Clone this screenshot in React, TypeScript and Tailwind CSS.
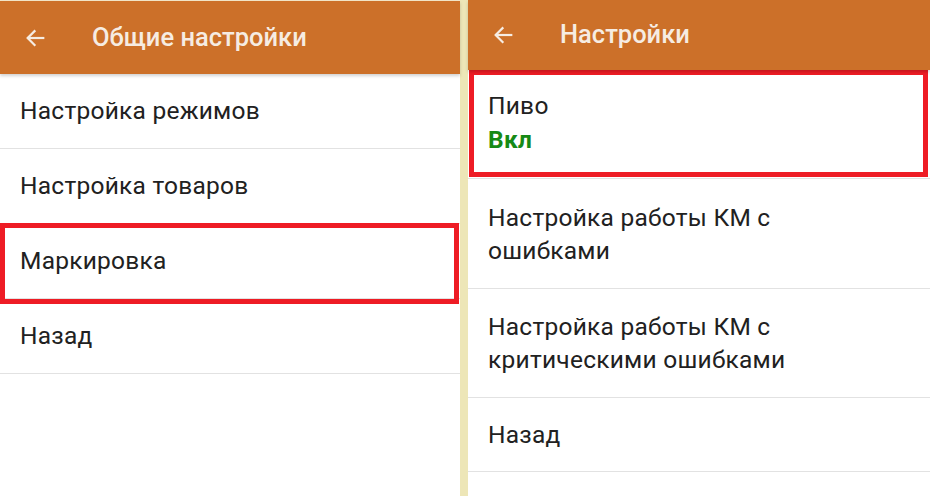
import React from "react";

const ArrowLeft = () => (
  <svg width="22" height="22" viewBox="0 0 24 24" fill="none" stroke="#f6ece2" strokeWidth="2.4" strokeLinecap="square">
    <path d="M21 12H4.5" />
    <path d="M11.5 4.5L4 12l7.5 7.5" />
  </svg>
);

const Header = ({ title, h }: { title: string; h: string }) => (
  <div className={`relative z-10 flex items-center bg-[#cc7029] ${h} shadow-[0_2px_3px_rgba(0,0,0,0.18)]`}>
    <div className="ml-[24px] flex w-[22px] items-center">
      <ArrowLeft />
    </div>
    <div className="ml-[46px] text-[25.5px] font-medium leading-none text-[#f6ece2]">{title}</div>
  </div>
);

const Row = ({ children, h }: { children: React.ReactNode; h: string }) => (
  <div className={`relative flex flex-col justify-center border-b border-[#e2e2e2] px-[20px] ${h}`}>
    {children}
  </div>
);

const T = ({ children, lh = "leading-[33px]", extra = "" }: { children: React.ReactNode; lh?: string; extra?: string }) => (
  <span className={`text-[24.5px] tracking-[0.25px] ${lh} ${extra}`}>{children}</span>
);

export default function App() {
  return (
    <div
      className="flex h-[496px] w-[930px] overflow-hidden bg-[#ede6b7] text-[#212121]"
      style={{ fontFamily: "Roboto, 'Noto Sans', sans-serif" }}
    >
      {/* Left screen */}
      <div className="flex h-full w-[460px] flex-col bg-white">
        <div className="h-[1px] bg-[#f3e6c8]" />
        <Header title="Общие настройки" h="h-[73px]" />
        <Row h="h-[75px]">
          <T lh="leading-[30px]">Настройка режимов</T>
        </Row>
        <Row h="h-[75px]">
          <T lh="leading-[30px]">Настройка товаров</T>
        </Row>
        <div className="relative flex h-[75px] flex-col justify-center border-b border-[#e2e2e2] px-[20px]">
          <div className="absolute left-0 top-[-1px] h-[81px] w-[459px] border-[5px] border-[#ee1c25]" />
          <T lh="leading-[30px]">Маркировка</T>
        </div>
        <Row h="h-[75px]">
          <T lh="leading-[30px]">Назад</T>
        </Row>
      </div>

      {/* Gap */}
      <div className="w-[8px]" />

      {/* Right screen */}
      <div className="flex h-full flex-1 flex-col bg-white">
        <Header title="Настройки" h="h-[70px]" />
        <div className="relative flex h-[109px] flex-col justify-center border-b border-[#e2e2e2] px-[20px] pb-[2px]">
          <div className="absolute left-[1px] top-0 h-[107px] w-[459px] border-[5px] border-[#ee1c25]" />
          <T lh="leading-[34px]">Пиво</T>
          <T lh="leading-[34px]" extra="font-bold text-[#168a16]">Вкл</T>
        </div>
        <Row h="h-[110px]">
          <T>Настройка работы КМ с</T>
          <T>ошибками</T>
        </Row>
        <Row h="h-[109px]">
          <T>Настройка работы КМ с</T>
          <T>критическими ошибками</T>
        </Row>
        <Row h="h-[74px]">
          <T lh="leading-[30px]">Назад</T>
        </Row>
      </div>
    </div>
  );
}
